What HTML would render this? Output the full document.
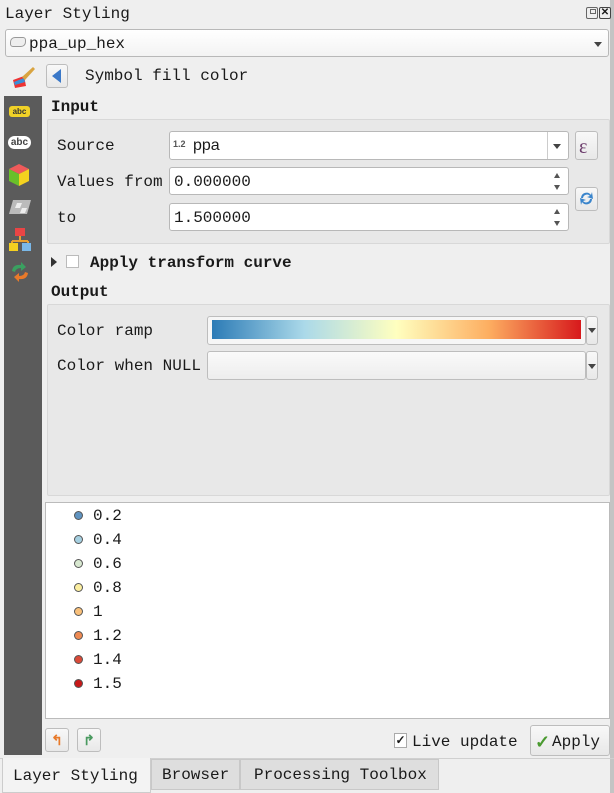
<!DOCTYPE html>
<html><head><meta charset="utf-8"><style>
*{box-sizing:border-box;margin:0;padding:0}
body{width:614px;height:793px;background:#efefef;font-family:"Liberation Mono","DejaVu Sans Mono",monospace;font-size:16px;color:#1a1a1a;position:relative;overflow:hidden}
.a{position:absolute}
.t{position:absolute;white-space:nowrap;line-height:18px;margin-top:1px}
.box{position:absolute;border:1px solid #b8b8b8;border-radius:3px;background:#fff}
.btn{position:absolute;border:1px solid #bdbdbd;border-radius:3px;background:linear-gradient(#f8f8f8,#e8e8e8)}
.grp{position:absolute;border:1px solid #d8d8d8;border-radius:2px;background:#e8e8e8}
.dot{position:absolute;width:9px;height:9px;border-radius:50%;border:1px solid #555;left:74px}
.tri{position:absolute;width:0;height:0;border-left:4px solid transparent;border-right:4px solid transparent;border-top:5px solid #444}
</style></head><body>
<div class="a" style="left:610px;top:0;width:4px;height:793px;background:#c4c4c4"></div>
<div class="t" style="left:5px;top:4px">Layer Styling</div>
<div class="a" style="left:586px;top:7px;width:12px;height:12px;border:1px solid #666;border-radius:2px"><div class="a" style="left:3px;top:1px;width:6px;height:5px;border:1px solid #666"></div></div>
<div class="a" style="left:599px;top:7px;width:12px;height:12px;border:1px solid #444;border-radius:2px;font:bold 10px sans-serif;line-height:10px;text-align:center">✕</div>

<div class="box" style="left:5px;top:29px;width:604px;height:28px;background:linear-gradient(#fff,#f3f3f3)"></div>
<div class="a" style="left:10px;top:37px;width:16px;height:10px;border:1px solid #999;border-radius:5px 3px 5px 3px;background:#eee"></div>
<div class="t" style="left:29px;top:34px">ppa_up_hex</div>
<div class="tri" style="left:594px;top:42px"></div>

<div class="a" style="left:4px;top:96px;width:38px;height:659px;background:#5b5b5b"></div>
<svg class="a" style="left:10px;top:64px" width="26" height="26"><path d="M3 16 L14 12 L16 22 L5 24Z" fill="#e33"/><path d="M4 18 L14 14 L15 18 L5 21Z" fill="#3a8fd8"/><path d="M12 13 L23 3 L25 5 L15 16Z" fill="#d9a441"/></svg>
<div class="a" style="left:9px;top:106px;width:21px;height:11px;background:#f1d227;border-radius:3px;font:bold 8px sans-serif;line-height:11px;text-align:center;color:#333">abc</div>
<div class="a" style="left:8px;top:136px;width:23px;height:13px;background:#fff;border-radius:7px;font:bold 10px sans-serif;line-height:13px;text-align:center;color:#444">abc</div>
<svg class="a" style="left:8px;top:163px" width="22" height="24"><path d="M11 1 L21 6 L11 11 L1 6Z" fill="#ef5a5a"/><path d="M1 6 L11 11 L11 23 L1 18Z" fill="#6ac02a"/><path d="M21 6 L11 11 L11 23 L21 18Z" fill="#f4d21f"/></svg>
<svg class="a" style="left:8px;top:198px" width="24" height="18"><path d="M5 2 L23 2 L19 16 L1 16Z" fill="#bbb"/><path d="M9 5 L14 5 L12 10 L7 10Z M14 10 L19 10 L17 15 L12 15Z" fill="#eee"/></svg>
<svg class="a" style="left:8px;top:227px" width="24" height="26"><rect x="7" y="1" width="10" height="8" fill="#e94545"/><path d="M12 9V14M4 14H20M4 14V17M20 14V17" stroke="#e8a030" stroke-width="2"/><rect x="1" y="16" width="9" height="8" fill="#f5d020"/><rect x="14" y="16" width="9" height="8" fill="#7ab8e8"/></svg>
<svg class="a" style="left:9px;top:261px" width="22" height="22"><path d="M3 10 Q4 3 12 4 L12 1 L17 6 L12 10 L12 7 Q7 7 6 11Z" fill="#3aa060"/><path d="M19 12 Q18 19 10 18 L10 21 L5 16 L10 12 L10 15 Q15 15 16 11Z" fill="#e87a2a"/></svg>

<div class="btn" style="left:46px;top:64px;width:22px;height:24px"></div>
<div class="a" style="left:52px;top:69px;width:0;height:0;border-top:7px solid transparent;border-bottom:7px solid transparent;border-right:9px solid #3a78c8"></div>
<div class="t" style="left:85px;top:66px">Symbol fill color</div>

<div class="t" style="left:51px;top:97px;font-weight:bold">Input</div>
<div class="grp" style="left:47px;top:119px;width:563px;height:125px"></div>
<div class="t" style="left:57px;top:136px">Source</div>
<div class="box" style="left:169px;top:131px;width:400px;height:29px"></div>
<div class="a" style="left:547px;top:132px;width:1px;height:27px;background:#ccc"></div>
<div class="tri" style="left:553px;top:144px"></div>
<div class="t" style="left:173px;top:138px;font:bold 9px sans-serif;color:#555">1.2</div>
<div class="t" style="left:193px;top:136px;font-family:'Liberation Sans',sans-serif">ppa</div>
<div class="btn" style="left:575px;top:131px;width:23px;height:29px"></div>
<div class="t" style="left:579px;top:135px;color:#6a3a6a;font:20px 'Liberation Serif',serif">ε</div>
<div class="t" style="left:57px;top:172px">Values from</div>
<div class="box" style="left:169px;top:167px;width:400px;height:28px"></div>
<div class="t" style="left:174px;top:172px">0.000000</div>
<div class="t" style="left:57px;top:208px">to</div>
<div class="box" style="left:169px;top:203px;width:400px;height:28px"></div>
<div class="t" style="left:174px;top:208px">1.500000</div>
<div class="a" style="left:554px;top:173px;border:3px solid transparent;border-bottom:5px solid #555;border-top:0"></div>
<div class="a" style="left:554px;top:185px;border:3px solid transparent;border-top:5px solid #555;border-bottom:0"></div>
<div class="a" style="left:554px;top:209px;border:3px solid transparent;border-bottom:5px solid #555;border-top:0"></div>
<div class="a" style="left:554px;top:221px;border:3px solid transparent;border-top:5px solid #555;border-bottom:0"></div>
<div class="btn" style="left:575px;top:187px;width:23px;height:24px"></div>
<svg class="a" style="left:578px;top:190px" width="17" height="17"><path d="M3 8 A5.5 5.5 0 0 1 13 5 L14 2 L15 9 L9 7 L12 6 A4 4 0 0 0 5 8Z" fill="#3a85cc"/><path d="M14 9 A5.5 5.5 0 0 1 4 12 L3 15 L2 8 L8 10 L5 11 A4 4 0 0 0 12 9Z" fill="#3a85cc"/></svg>

<div class="a" style="left:51px;top:257px;border-top:5px solid transparent;border-bottom:5px solid transparent;border-left:6px solid #333"></div>
<div class="a" style="left:66px;top:255px;width:13px;height:13px;border:1px solid #bbb;background:#fff"></div>
<div class="t" style="left:90px;top:253px;font-weight:bold">Apply transform curve</div>

<div class="t" style="left:51px;top:282px;font-weight:bold">Output</div>
<div class="grp" style="left:47px;top:304px;width:563px;height:192px"></div>
<div class="t" style="left:57px;top:321px">Color ramp</div>
<div class="btn" style="left:207px;top:316px;width:379px;height:29px;background:#f6f6f6"></div>
<div class="a" style="left:212px;top:320px;width:369px;height:19px;background:linear-gradient(90deg,#2c7bb6,#abd9e9 25%,#ffffbf 50%,#fdae61 75%,#d7191c)"></div>
<div class="btn" style="left:586px;top:316px;width:12px;height:29px"></div>
<div class="tri" style="left:588px;top:328px"></div>
<div class="t" style="left:57px;top:356px">Color when NULL</div>
<div class="btn" style="left:207px;top:351px;width:379px;height:29px;background:linear-gradient(#fafafa,#ededed)"></div>
<div class="btn" style="left:586px;top:351px;width:12px;height:29px"></div>
<div class="tri" style="left:588px;top:364px"></div>

<div class="a" style="left:45px;top:502px;width:565px;height:217px;background:#fff;border:1px solid #bbb"></div>
<div class="dot" style="top:511px;background:#5f93c0"></div><div class="t" style="left:93px;top:506px">0.2</div>
<div class="dot" style="top:535px;background:#a5cfe0"></div><div class="t" style="left:93px;top:530px">0.4</div>
<div class="dot" style="top:559px;background:#d8e8d0"></div><div class="t" style="left:93px;top:554px">0.6</div>
<div class="dot" style="top:583px;background:#fbeea0"></div><div class="t" style="left:93px;top:578px">0.8</div>
<div class="dot" style="top:607px;background:#f9c07a"></div><div class="t" style="left:93px;top:602px">1</div>
<div class="dot" style="top:631px;background:#ee8a52"></div><div class="t" style="left:93px;top:626px">1.2</div>
<div class="dot" style="top:655px;background:#da4a38"></div><div class="t" style="left:93px;top:650px">1.4</div>
<div class="dot" style="top:679px;background:#c81818"></div><div class="t" style="left:93px;top:674px">1.5</div>

<div class="btn" style="left:45px;top:728px;width:24px;height:24px;color:#e87a2a;font:bold 14px sans-serif;text-align:center;line-height:22px">↰</div>
<div class="btn" style="left:77px;top:728px;width:24px;height:24px;color:#4a9a60;font:bold 14px sans-serif;text-align:center;line-height:22px">↱</div>
<div class="a" style="left:394px;top:733px;width:13px;height:15px;border:1px solid #aaa;background:#fff;font:bold 12px sans-serif;line-height:13px;text-align:center">✓</div>
<div class="t" style="left:412px;top:732px">Live update</div>
<div class="btn" style="left:530px;top:725px;width:80px;height:31px"></div>
<div class="t" style="left:535px;top:731px;color:#4a9a30;font:bold 18px sans-serif">✓</div>
<div class="t" style="left:552px;top:732px">Apply</div>

<div class="a" style="left:0;top:758px;width:614px;height:1px;background:#d0d0d0"></div>
<div class="a" style="left:2px;top:758px;width:149px;height:35px;background:#f3f3f3;border:1px solid #ccc;border-top:none"></div>
<div class="t" style="left:13px;top:766px">Layer Styling</div>
<div class="a" style="left:151px;top:759px;width:89px;height:31px;background:#dedede;border:1px solid #c8c8c8"></div>
<div class="t" style="left:162px;top:765px">Browser</div>
<div class="a" style="left:240px;top:759px;width:199px;height:31px;background:#dedede;border:1px solid #c8c8c8"></div>
<div class="t" style="left:254px;top:765px">Processing Toolbox</div>
</body></html>
